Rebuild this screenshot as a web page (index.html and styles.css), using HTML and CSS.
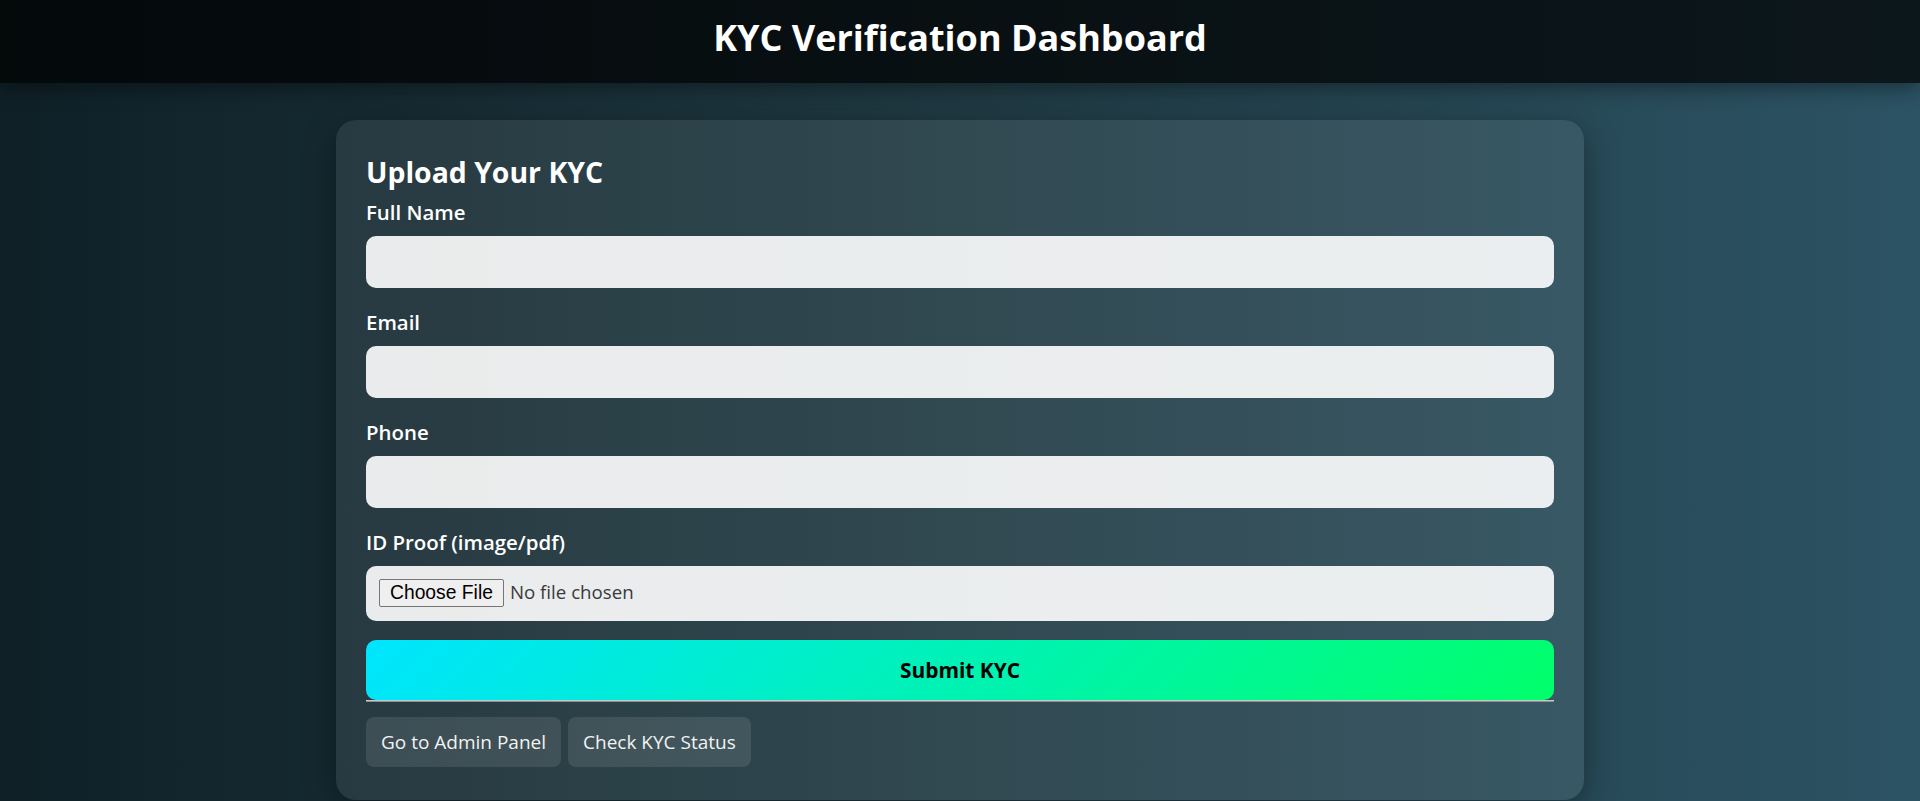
FILE: index.html
```html
<!DOCTYPE html>
<html lang="en">
<head>
<meta charset="utf-8">
<title>KYC Verification Dashboard</title>
<link rel="stylesheet" href="styles.css">
</head>
<body>
<header class="topbar">
  <h1 class="title">KYC Verification Dashboard</h1>
</header>
<main class="page">
  <section class="card">
    <h2 class="card-title">Upload Your KYC</h2>
    <form class="kyc-form">
      <label class="field-label" for="fullName">Full Name</label>
      <input class="field-input" id="fullName" type="text">
      <label class="field-label" for="email">Email</label>
      <input class="field-input" id="email" type="email">
      <label class="field-label" for="phone">Phone</label>
      <input class="field-input" id="phone" type="tel">
      <label class="field-label" for="idProof">ID Proof (image/pdf)</label>
      <input class="field-input file-input" id="idProof" type="file" accept="image/*,.pdf">
      <button class="submit-btn" type="button">Submit KYC</button>
      <div class="divider"></div>
    </form>
    <div class="actions">
      <button class="link-btn" type="button">Go to Admin Panel</button>
      <button class="link-btn" type="button">Check KYC Status</button>
    </div>
  </section>
</main>
</body>
</html>
```
FILE: styles.css
```css
html, body {
  margin: 0;
  padding: 0;
}

body {
  min-height: 100vh;
  font-family: "Open Sans", "Noto Sans", sans-serif;
  color: #fff;
  background: linear-gradient(to right, #0f2027, #203a43, #2c5364);
  overflow: hidden;
}

.topbar {
  position: relative;
  z-index: 1;
  padding: 13px 0 21px;
  text-align: center;
  background: rgba(0, 0, 0, 0.72);
  box-shadow: 0 4px 20px rgba(0, 0, 0, 0.45);
}

.title {
  margin: 0;
  font-size: 36px;
  font-weight: 700;
  line-height: 49px;
  color: #fff;
}

.page {
  display: flex;
  justify-content: center;
  padding-top: 37px;
}

.card {
  width: 65%;
  box-sizing: border-box;
  padding: 30px 30px 33px;
  border-radius: 20px;
  background: rgba(255, 255, 255, 0.08);
  box-shadow: 0 8px 32px rgba(0, 0, 0, 0.37);
}

.card-title {
  margin: 3px 0 6px;
  font-size: 28.4px;
  font-weight: 700;
  line-height: 39px;
  color: #fff;
}

.kyc-form {
  display: flex;
  flex-direction: column;
}

.field-label {
  display: block;
  margin-bottom: 10px;
  font-size: 20.4px;
  font-weight: 600;
  line-height: 28px;
  color: #fff;
}

.field-input {
  display: block;
  box-sizing: border-box;
  width: 100%;
  height: 52px;
  margin: 0 0 20px;
  padding: 12px;
  border: 1px solid transparent;
  border-radius: 10px;
  background: rgba(255, 255, 255, 0.9);
  font-family: "Open Sans", sans-serif;
  font-size: 18.7px;
  color: #3a3a3a;
  outline: none;
}

.file-input {
  height: 55px;
  margin-bottom: 19px;
}

.file-input::file-selector-button {
  margin: 0 6px 0 0;
  padding: 2px 10px;
  border: 1px solid #767676;
  border-radius: 2px;
  background: #efefef;
  font-family: "Liberation Sans", Arial, sans-serif;
  font-size: 19.3px;
  color: #000;
}

.submit-btn {
  display: block;
  width: 100%;
  height: 60px;
  margin: 0;
  padding: 0;
  border: none;
  border-radius: 10px;
  background: linear-gradient(135deg, #00e5ff, #00ff6a);
  font-family: "Open Sans", sans-serif;
  font-size: 20.9px;
  font-weight: 700;
  color: #000;
  cursor: pointer;
}

.divider {
  height: 1px;
  border-top: 1px solid #c4c6c8;
  background: #8c9396;
}

.actions {
  display: flex;
  gap: 7px;
  margin-top: 15px;
}

.link-btn {
  height: 50px;
  padding: 0 15px;
  border: none;
  border-radius: 8px;
  background: rgba(255, 255, 255, 0.1);
  font-family: "Open Sans", sans-serif;
  font-size: 19px;
  font-weight: 400;
  color: #f2f2f2;
  cursor: pointer;
}
```
